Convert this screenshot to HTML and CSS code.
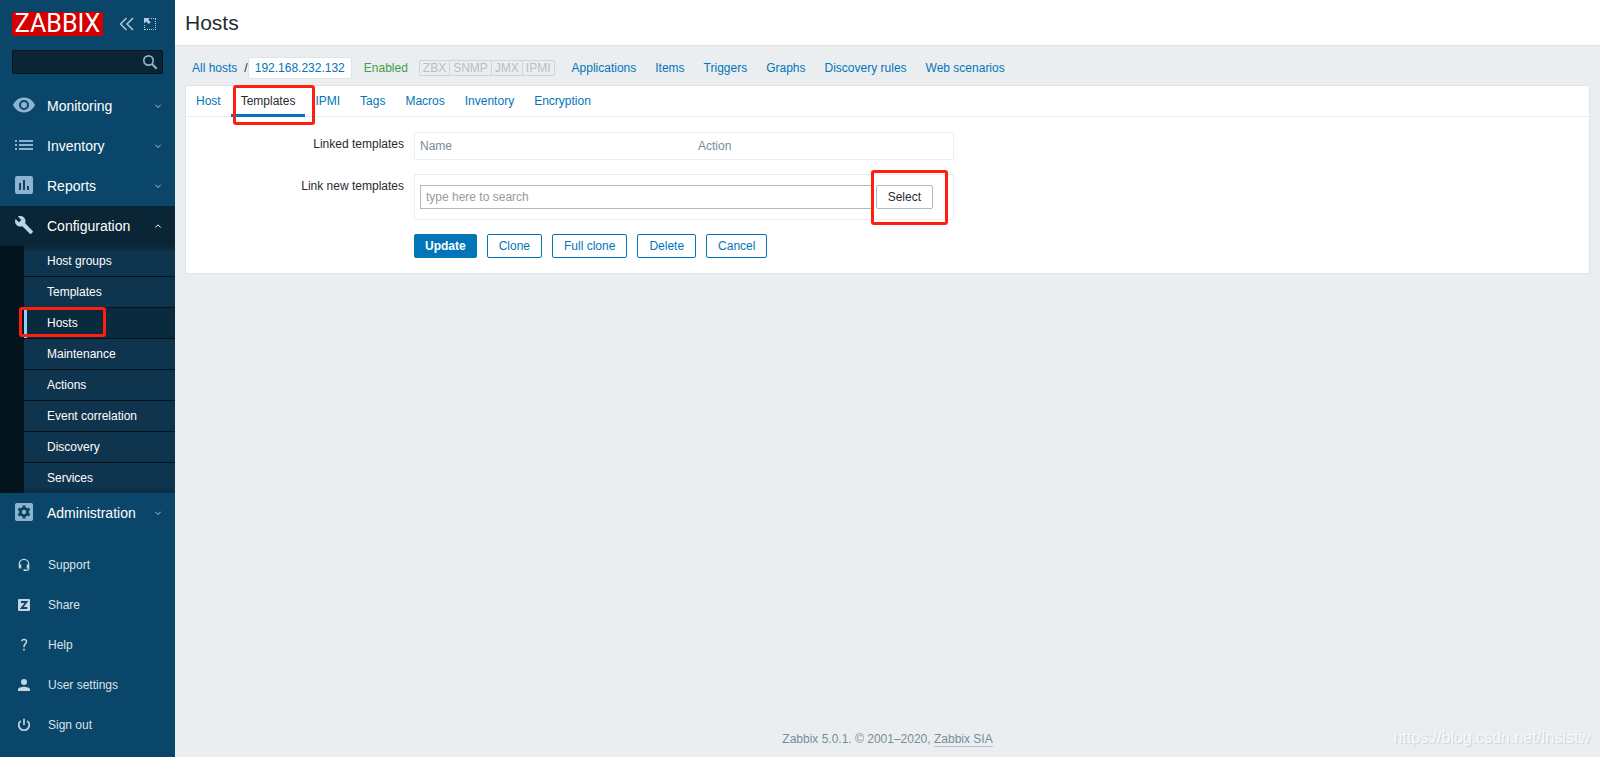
FILE: index.html
```html
<!DOCTYPE html>
<html lang="en">
<head>
<meta charset="utf-8">
<title>Configuration of hosts</title>
<link rel="stylesheet" href="styles.css">
</head>
<body>
<aside class="sidebar">
  <div class="brand">
    <a class="logo" href="#">ZABBIX</a>
    <button class="icon-btn" type="button" aria-label="Collapse sidebar"><svg width="16" height="14" viewBox="0 0 16 14" fill="none" stroke="#b3cbda" stroke-width="1.5"><path d="M7.5 1 1.5 7l6 6M14 1 8 7l6 6"/></svg></button>
    <button class="icon-btn" type="button" aria-label="Hide sidebar"><svg width="12" height="12" viewBox="0 0 12 12"><g fill="none" stroke="#b3cbda" stroke-dasharray="1 1"><path d="M7 .5h5M11.500 1v11M.5 7v5M1 11.500h11"/></g><path fill="#b3cbda" d="M0 0h6L4.200 1.800 6.700 4.300 4.800 6 2 3.500 0 5.500z"/></svg></button>
  </div>
  <form class="search">
    <input type="text" aria-label="Search">
    <button type="button" aria-label="Search"><svg width="16" height="16" viewBox="0 0 16 16" fill="none" stroke="#8fb0c6"><circle cx="6.500" cy="6.500" r="4.700" stroke-width="1.700"/><path d="m10 10 4.700 4.700" stroke-width="2.200"/></svg></button>
  </form>
  <nav class="menu">
    <a class="menu-item" href="#"><svg class="mi" viewBox="0 0 22 22"><path fill="#8db3ce" fill-rule="evenodd" d="M11 2.500C6 2.500 2 5.500 0 10c2 4.500 6 7.500 11 7.500s9-3 11-7.500c-2-4.500-6-7.500-11-7.500zM11 5a5 5 0 1 1 0 10 5 5 0 0 1 0-10zm0 2a3 3 0 1 0 0 6 3 3 0 0 0 0-6z"/></svg><span>Monitoring</span><svg class="chev" viewBox="0 0 8 8"><path d="m1.300 2.800 2.700 2.700 2.700-2.700"/></svg></a>
    <a class="menu-item" href="#"><svg class="mi" viewBox="0 0 22 22"><path fill="#8db3ce" d="M2 5h2v2H2zM6 5h14v2H6zM2 9h2v2H2zM6 9h14v2H6zM2 13h2v2H2zM6 13h14v2H6z"/></svg><span>Inventory</span><svg class="chev" viewBox="0 0 8 8"><path d="m1.300 2.800 2.700 2.700 2.700-2.700"/></svg></a>
    <a class="menu-item" href="#"><svg class="mi" viewBox="0 0 22 22"><path fill="#8db3ce" fill-rule="evenodd" d="M4 1h14a2 2 0 0 1 2 2v14a2 2 0 0 1-2 2H4a2 2 0 0 1-2-2V3a2 2 0 0 1 2-2zm2 7v7h2V8zm4-3v10h2V5zm4 6v4h2v-4z"/></svg><span>Reports</span><svg class="chev" viewBox="0 0 8 8"><path d="m1.300 2.800 2.700 2.700 2.700-2.700"/></svg></a>
    <a class="menu-item open" href="#"><svg class="mi" viewBox="-1 0 22 22"><path fill="#b5d5ea" d="M18.700 15.900 11.200 8.200C12 6.200 11.500 3.900 9.900 2.500 8.200 1 5.900.7 3.900 1.500L7.300 4.900 5 7.300 1.500 3.900C.6 5.900 1 8.400 2.600 10c1.600 1.600 3.800 2 5.700 1.200l7.600 7.600c.4.400.9.400 1.300 0l1.500-1.600c.5-.4.500-.9 0-1.300z"/></svg><span>Configuration</span><svg class="chev" viewBox="0 0 8 8"><path d="M1.300 5.500 4 2.800l2.700 2.700"/></svg></a>
    <ul class="submenu">
      <li><a href="#">Host groups</a></li>
      <li><a href="#">Templates</a></li>
      <li class="current"><a href="#">Hosts</a></li>
      <li><a href="#">Maintenance</a></li>
      <li><a href="#">Actions</a></li>
      <li><a href="#">Event correlation</a></li>
      <li><a href="#">Discovery</a></li>
      <li><a href="#">Services</a></li>
    </ul>
    <a class="menu-item" href="#"><svg class="mi" viewBox="0 0 22 22"><rect x="2" y="1" width="18" height="18" rx="2" fill="#8db3ce"/><g fill="#0a466a"><circle cx="11" cy="10" r="5"/><path d="M9.500 3.500h3v13h-3z"/><path d="M9.500 3.500h3v13h-3z" transform="rotate(60 11 10)"/><path d="M9.500 3.500h3v13h-3z" transform="rotate(120 11 10)"/></g><circle cx="11" cy="10" r="2.200" fill="#8db3ce"/></svg><span>Administration</span><svg class="chev" viewBox="0 0 8 8"><path d="m1.300 2.800 2.700 2.700 2.700-2.700"/></svg></a>
  </nav>
  <nav class="user-menu">
    <a href="#"><svg viewBox="0 0 14 14"><path fill="none" stroke="#c4d5df" stroke-width="1.300" d="M2.300 8V6a4.700 4.700 0 0 1 9.400 0v4.500c0 1.200-.7 1.800-2 1.800H7.500"/><path fill="#c4d5df" d="M2 6.500h2.300v4H3a1.300 1.300 0 0 1-1.300-1.300zM9.700 6.500H12v4H9.700zM6.500 11.300h2.300v1.800H6.500z"/></svg>Support</a>
    <a href="#"><svg viewBox="0 0 14 14"><rect x="1" y="1" width="12" height="12" rx="1" fill="#c4d5df"/><path fill="none" stroke="#0a466a" stroke-width="1.800" d="M4 4h5.500L4.700 10H10.200"/></svg>Share</a>
    <a href="#"><svg viewBox="0 0 14 14"><path fill="none" stroke="#c4d5df" stroke-width="1.500" d="M4.500 3.300C5 1.900 6 1.500 7 1.500c1.500 0 2.500.9 2.500 2.200C9.500 5.800 7 6 7 8.500v.7"/><path fill="#c4d5df" d="M6.100 10.800h1.700v1.700H6.100z"/></svg>Help</a>
    <a href="#"><svg viewBox="0 0 14 14"><path fill="#c4d5df" d="M7 1a3 3 0 1 1 0 6 3 3 0 0 1 0-6zM1 13v-1.500C1 9.700 4.500 8.700 7 8.700s6 1 6 2.800V13z"/></svg>User settings</a>
    <a href="#"><svg viewBox="0 0 14 14"><path fill="none" stroke="#c4d5df" stroke-width="1.700" d="M7 .8V7M3.700 2.800a5.300 5.300 0 1 0 6.600 0"/></svg>Sign out</a>
  </nav>
</aside>
<div class="wrapper">
  <header class="page-title"><h1>Hosts</h1></header>
  <main>
    <nav class="host-nav">
      <span class="crumbs"><a href="#">All hosts</a><span>/</span><a class="selected" href="#">192.168.232.132</a></span>
      <span class="enabled">Enabled</span>
      <span class="status"><span>ZBX</span><span>SNMP</span><span>JMX</span><span>IPMI</span></span>
      <a href="#">Applications</a>
      <a href="#">Items</a>
      <a href="#">Triggers</a>
      <a href="#">Graphs</a>
      <a href="#">Discovery rules</a>
      <a href="#">Web scenarios</a>
    </nav>
    <section class="panel">
      <nav class="tabs">
        <a href="#">Host</a>
        <a class="active" href="#">Templates</a>
        <a href="#">IPMI</a>
        <a href="#">Tags</a>
        <a href="#">Macros</a>
        <a href="#">Inventory</a>
        <a href="#">Encryption</a>
      </nav>
      <form class="host-form">
        <span class="label" id="linked">Linked templates</span>
        <table class="box linked" aria-labelledby="linked">
          <thead><tr><th>Name</th><th>Action</th></tr></thead>
        </table>
        <label class="label" for="new-templates">Link new templates</label>
        <div class="box picker">
          <input id="new-templates" type="text" placeholder="type here to search">
          <span class="select-wrap"><button class="btn grey" type="button">Select</button></span>
        </div>
        <div class="actions">
          <button class="btn primary" type="button">Update</button>
          <button class="btn" type="button">Clone</button>
          <button class="btn" type="button">Full clone</button>
          <button class="btn" type="button">Delete</button>
          <button class="btn" type="button">Cancel</button>
        </div>
      </form>
    </section>
  </main>
  <footer>Zabbix 5.0.1. © 2001–2020, <a href="#">Zabbix SIA</a></footer>
  <div class="watermark">https://blog.csdn.net/Insistw</div>
</div>
</body>
</html>
```
FILE: styles.css
```css
*, *::before, *::after { box-sizing: border-box; }
body {
  margin: 0;
  min-height: 100vh;
  display: flex;
  background: #ebeef0;
  color: #1f2c33;
  font: 12px/14px "Liberation Sans", Arial, sans-serif;
}
a { color: #0275b8; text-decoration: none; }
button, input { font: inherit; }
svg { display: block; flex: none; }

/* Sidebar */
.sidebar { width: 175px; flex: none; background: #0a466a; }
.brand { display: flex; align-items: center; height: 24px; margin: 12px 12px 14px; }
.logo {
  flex: none;
  width: 91px;
  margin-right: 16px;
  background: #d40000;
  color: #fff;
  font: 25px/24px Roboto, sans-serif;
  text-align: center;
}
.icon-btn { flex: none; border: 0; padding: 0; margin-right: 9px; background: none; }
.icon-btn:last-child { margin-right: 0; }
.search {
  display: flex;
  align-items: center;
  height: 24px;
  margin: 0 12px 12px;
  padding-right: 4px;
  border: 1px solid #04141f;
  border-radius: 2px;
  background: #0a2636;
}
.search input { flex: 1; min-width: 0; border: 0; outline: 0; background: none; color: #fff; }
.search button { border: 0; padding: 0; background: none; }
.menu-item {
  display: flex;
  align-items: center;
  height: 40px;
  padding: 0 13px;
  color: #fff;
  font-size: 14px;
}
.menu-item span { flex: 1; }
.menu-item.open { background: #0a2636; }
.mi { width: 22px; height: 22px; margin-right: 12px; }
.chev { width: 8px; height: 8px; fill: none; stroke: #a9c4d5; stroke-width: 1px; }
.menu-item.open .chev { stroke: #fff; }
.submenu {
  margin: 0;
  padding: 0 0 0 24px;
  list-style: none;
  background: linear-gradient(90deg, #04141d 24px, #0f344e 24px);
}
.submenu li { position: relative; }
.submenu li + li { border-top: 1px solid #04141d; }
.submenu a { display: block; padding: 8px 20px 8px 23px; color: #fff; }
.submenu li:first-child { background: linear-gradient(#0a2636, #0f344e 6px); }
.submenu li:last-child { background: linear-gradient(#0f344e 24px, #0a2c42); }
.submenu .current a { background: #0a2a3d; border-left: 3px solid #8fd0ff; padding-left: 20px; }
.user-menu { margin-top: 12px; }
.user-menu a { display: flex; align-items: center; gap: 17px; height: 40px; padding: 0 17px; color: #dae3e9; }
.user-menu svg { width: 14px; height: 14px; }

/* Content */
.wrapper { position: relative; flex: 1; min-width: 0; display: flex; flex-direction: column; }
.page-title { padding: 11px 10px 10px; background: #fff; border-bottom: 1px solid #dfe4e7; }
h1 { margin: 0; font-size: 21px; line-height: 24px; font-weight: 400; }
main { padding: 10px; }
.host-nav { display: flex; align-items: center; height: 24px; margin: 0 7px 5px; gap: 19px; }
.host-nav > * { white-space: nowrap; }
.crumbs { display: flex; align-items: center; gap: 7px; margin-right: -7px; }
.crumbs span { margin-right: -7px; }
.crumbs .selected { padding: 3px 6px; background: #fff; border: 1px solid #dfe4e7; border-radius: 2px; }
.enabled { color: #429e47; }
.status { display: flex; margin: 0 -2px 0 -8px; border: 1px solid #ccd5d9; border-radius: 2px; color: #b6bfc4; }
.status span { padding: 0 3px; }
.status span + span { border-left: 1px solid #ccd5d9; }
.panel { background: #fff; border: 1px solid #dfe4e7; }
.tabs { display: flex; height: 31px; border-bottom: 1px solid #ebeef0; }
.tabs a { position: relative; height: 31px; padding: 8px 10px; }
.tabs .active { color: #1f2c33; border-bottom: 3px solid #0275b8; }
.host-form { display: grid; grid-template-columns: 218px minmax(0, 540px); gap: 14px 10px; padding: 15px 0; }
.label { padding-top: 5px; text-align: right; }
.box { border: 1px solid #ebeef0; }
.linked { width: 100%; height: 28px; border-collapse: separate; border-spacing: 0; table-layout: fixed; }
.linked th { padding: 0 5px; text-align: left; font-weight: 400; color: #768d99; }
.linked th:first-child { width: 278px; }
.picker { display: flex; gap: 4px; padding: 10px 20px 10px 5px; }
.picker input {
  flex: 1;
  min-width: 0;
  height: 24px;
  padding: 0 5px;
  border: 1px solid #acbbc2;
  background: #fff;
  color: #1f2c33;
}
.picker input::placeholder { color: #9a9a9a; }
.select-wrap { position: relative; }
.actions { grid-column: 2; display: flex; gap: 10px; }
.btn {
  height: 24px;
  padding: 0 11px;
  border: 1px solid #0275b8;
  border-radius: 2px;
  background: #fff;
  color: #0275b8;
  white-space: nowrap;
}
.btn.primary { padding: 0 10px; background: #0275b8; color: #fff; font-weight: 700; }
.btn.grey { border-color: #acbbc2; color: #1f2c33; }
footer { margin-top: auto; padding: 10px; text-align: center; color: #768d99; line-height: 16px; }
footer a { display: inline-block; line-height: 14px; color: inherit; border-bottom: 1px solid #b9c5cb; }
.watermark {
  position: absolute;
  right: 10px;
  bottom: 10px;
  color: #f8fafb;
  font-size: 16px;
  line-height: 18px;
  text-shadow: 1px 1px 1px #c9cdcf;
}

/* Red frames marking the steps */
.current::after, .tabs .active::after, .select-wrap::after {
  content: "";
  position: absolute;
  z-index: 1;
  border: 3px solid #ff1e10;
  border-radius: 3px;
  pointer-events: none;
}
.current::after { left: -5px; top: -1px; width: 87px; height: 30px; }
.tabs .active::after { left: 2px; top: -1px; width: 82px; height: 40px; }
.select-wrap::after { left: -5px; top: -15px; width: 77px; height: 55px; }
```
